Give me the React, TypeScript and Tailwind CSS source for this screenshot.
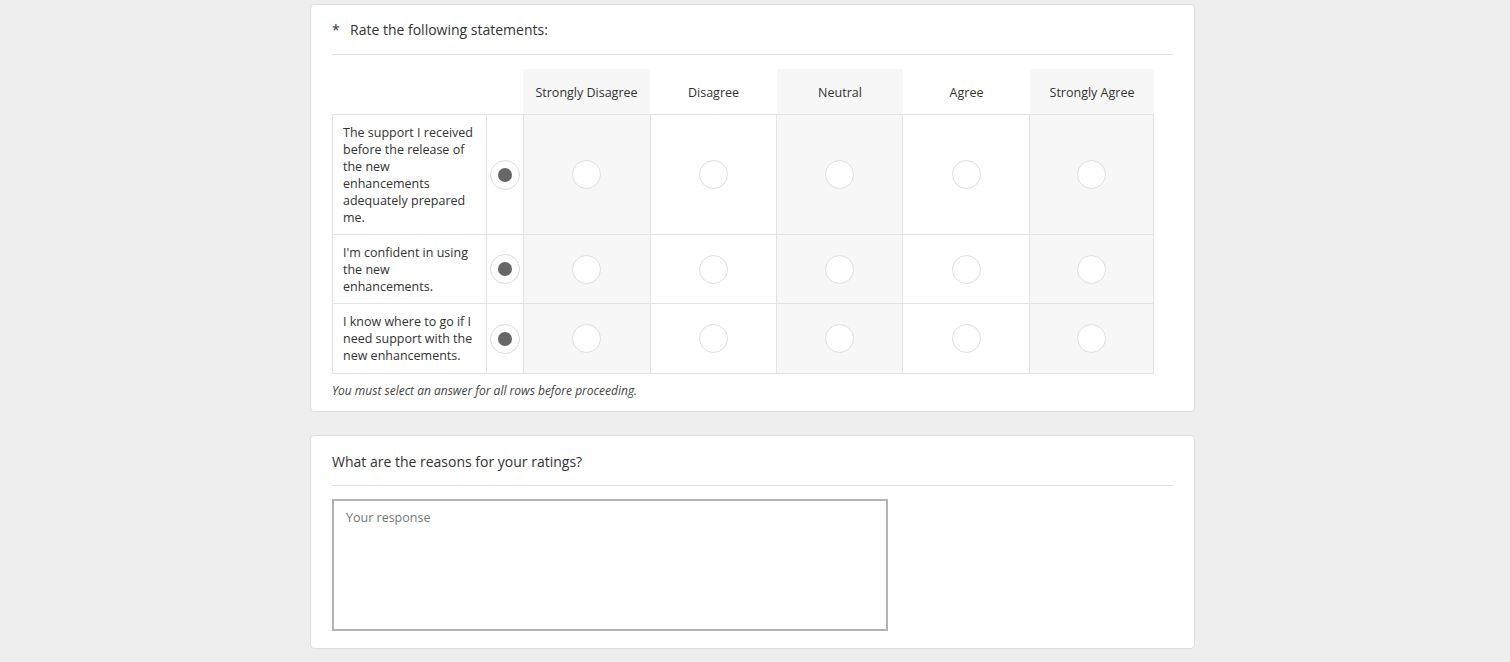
import React from "react";

const cols = ["Strongly Disagree", "Disagree", "Neutral", "Agree", "Strongly Agree"];
const widths = ["w-[127px]", "w-[127px]", "w-[126px]", "w-[127px]", "w-[124px]"];
const rows = [
  { text: "The support I received before the release of the new enhancements adequately prepared me.", h: "h-[120px]" },
  { text: "I'm confident in using the new enhancements.", h: "h-[69px]" },
  { text: "I know where to go if I need support with the new enhancements.", h: "h-[70px]" },
];

function EmptyRadio() {
  return <div className="w-[29px] h-[29px] rounded-full bg-white border border-[#dedede]" />;
}

function SelectedRadio() {
  return (
    <div className="w-[30px] h-[30px] rounded-full bg-white border border-[#dcdcdc] flex items-center justify-center">
      <div className="w-[14px] h-[14px] rounded-full bg-[#666666]" />
    </div>
  );
}

export default function App() {
  return (
    <div className="min-h-[662px] bg-[#eeeeee] flex flex-col items-center pt-[4px] gap-[23px] text-[#333333]" style={{ fontFamily: '"Open Sans", sans-serif' }}>
      <div className="w-[885px] bg-white border border-[#dcdce3] rounded-[4px] px-[21px] pt-[14px] pb-[11px] ml-[-5px]">
        <div className="flex items-center h-[20px] text-[14px] text-[#333]">
          <span className="w-[18px] text-[14px]">*</span>
          <span>Rate the following statements:</span>
        </div>
        <div className="mt-[15px] border-t border-[#e1e1e6]" />
        <div className="mt-[14px] w-[822px]">
          <div className="flex h-[45px]">
            <div className="w-[154px]" />
            <div className="w-[37px]" />
            {cols.map((c, i) => (
              <div key={c} className={`${widths[i]} flex items-center justify-center pt-[3px] text-[12.5px] text-[#333] ${i % 2 === 0 ? "bg-[#f7f7f7]" : ""}`}>
                {c}
              </div>
            ))}
          </div>
          <div className="border-l border-t border-[#e3e3e3]">
            {rows.map((r, ri) => (
              <div key={ri} className={`flex ${r.h} border-b border-[#e3e3e3]`}>
                <div className="w-[154px] border-r border-[#e3e3e3] px-[10px] flex items-center text-[12.5px] leading-[17px] text-[#333]">
                  {r.text}
                </div>
                <div className="w-[37px] border-r border-[#e3e3e3] flex items-center justify-center">
                  <SelectedRadio />
                </div>
                {cols.map((c, i) => (
                  <div key={c} className={`${widths[i]} border-r border-[#e3e3e3] flex items-center justify-center ${i % 2 === 0 ? "bg-[#f7f7f7]" : ""}`}>
                    <EmptyRadio />
                  </div>
                ))}
              </div>
            ))}
          </div>
        </div>
        <div className="mt-[8px] text-[12px] italic text-[#444]">You must select an answer for all rows before proceeding.</div>
      </div>

      <div className="w-[885px] bg-white border border-[#dcdce3] rounded-[4px] px-[21px] pt-[15px] pb-[17px] ml-[-5px]">
        <div className="flex items-center h-[20px] text-[14px] text-[#333]">What are the reasons for your ratings?</div>
        <div className="mt-[14px] border-t border-[#e1e1e6]" />
        <div className="mt-[13px] w-[556px] h-[132px] border-2 border-[#b4b4b4] px-[12px] pt-[8px] text-[12.5px] text-[#777]">
          Your response
        </div>
      </div>
    </div>
  );
}
